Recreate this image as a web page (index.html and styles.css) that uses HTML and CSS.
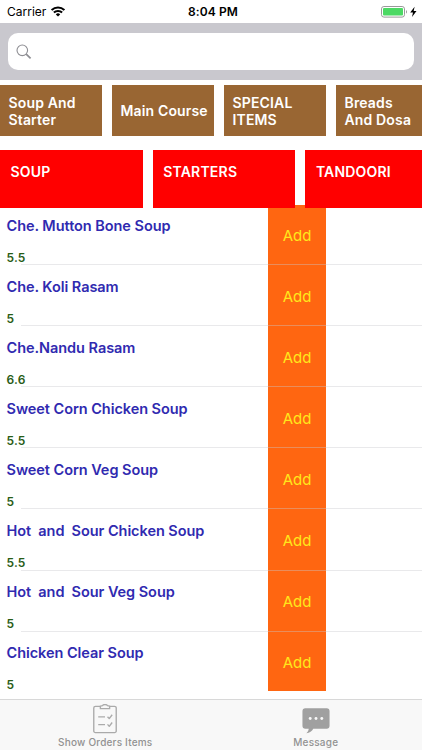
FILE: index.html
```html
<!DOCTYPE html>
<html lang="en">
<head>
  <meta charset="UTF-8">
  <meta name="viewport" content="width=device-width, initial-scale=1.0">
  <title>Menu</title>
  <link rel="stylesheet" href="styles.css">
</head>
<body>
  <div class="app">
    <header class="status-bar">
      <div class="status-left">
        <span class="carrier">Carrier</span>
        <svg class="wifi" width="14" height="11" viewBox="0 0 14 11">
          <path d="M0.6 4.1a9.100 9.100 0 0 1 12.800 0M2.900 6.600a5.900 5.900 0 0 1 8.200 0" fill="none" stroke="#000" stroke-width="2.100"/>
          <path d="M7 10.6 4.8 8.4a3.2 3.2 0 0 1 4.4 0z"/>
        </svg>
      </div>
      <span class="clock">8:04 PM</span>
      <div class="status-right">
        <svg width="37" height="12" viewBox="0 0 37 12">
          <rect x="0.5" y="0.5" width="23" height="10.6" rx="2.4" fill="#fff" stroke="#999"/>
          <rect x="2" y="2" width="20" height="7.6" rx="1" fill="#4cd964"/>
          <path d="M25 4v3.6c1.3-.5 1.3-3.1 0-3.6z" fill="#999"/>
          <path d="M33.6 0.8 29.2 6.5h2.8l-1 4.5 4.5-6h-2.8z"/>
        </svg>
      </div>
    </header>

    <div class="search-bar">
      <div class="search-field">
        <svg width="16" height="16" viewBox="0 0 16 16" fill="none" stroke="#8e8e93">
          <circle cx="6.3" cy="6.3" r="5.3" stroke-width="1.1"/>
          <path d="M10.2 10.2l4.4 4.2" stroke-width="1.7"/>
        </svg>
      </div>
    </div>

    <nav class="categories">
      <div class="category">Soup And<br>Starter</div>
      <div class="category">Main Course</div>
      <div class="category">SPECIAL<br>ITEMS</div>
      <div class="category">Breads<br>And Dosa</div>
    </nav>

    <nav class="sections">
      <div class="section">SOUP</div>
      <div class="section">STARTERS</div>
      <div class="section">TANDOORI</div>
    </nav>

    <!-- Menu items -->
    <main class="items">
      <div class="item">
        <div class="info"><div class="name">Che. Mutton Bone Soup</div><div class="price">5.5</div></div>
        <button class="add">Add</button>
      </div>
      <div class="item">
        <div class="info"><div class="name">Che. Koli Rasam</div><div class="price">5</div></div>
        <button class="add">Add</button>
      </div>
      <div class="item">
        <div class="info"><div class="name">Che.Nandu Rasam</div><div class="price">6.6</div></div>
        <button class="add">Add</button>
      </div>
      <div class="item">
        <div class="info"><div class="name">Sweet Corn Chicken Soup</div><div class="price">5.5</div></div>
        <button class="add">Add</button>
      </div>
      <div class="item">
        <div class="info"><div class="name">Sweet Corn Veg Soup</div><div class="price">5</div></div>
        <button class="add">Add</button>
      </div>
      <div class="item">
        <div class="info"><div class="name">Hot  and  Sour Chicken Soup</div><div class="price">5.5</div></div>
        <button class="add">Add</button>
      </div>
      <div class="item">
        <div class="info"><div class="name">Hot  and  Sour Veg Soup</div><div class="price">5</div></div>
        <button class="add">Add</button>
      </div>
      <div class="item">
        <div class="info"><div class="name">Chicken Clear Soup</div><div class="price">5</div></div>
        <button class="add">Add</button>
      </div>
    </main>

    <footer class="tab-bar">
      <div class="tab">
        <svg width="26" height="31" viewBox="0 0 26 31" fill="none" stroke="#aaa" stroke-width="1.4" stroke-linejoin="round">
          <path d="M8 2.400H3.2a1.8 1.8 0 0 0-1.8 1.8v23.600a1.8 1.8 0 0 0 1.8 1.8h19.6a1.8 1.8 0 0 0 1.8-1.8V4.200a1.8 1.8 0 0 0-1.8-1.8H18"/>
          <path d="M8.200 4.800V2.200l2.300-.5c.5-1.500 4.500-1.500 5 0l2.300.5v2.600z"/>
          <path d="M6 13.300h7M6 21.300h7M15.600 13.100l1.800 2 3-4M15.600 21.100l1.800 2 3-4"/>
        </svg>
        <span>Show Orders Items</span>
      </div>
      <div class="tab">
        <svg width="30" height="31" viewBox="0 0 30 31">
          <path d="M4 4.500h22a3 3 0 0 1 3 3v15a3 3 0 0 1-3 3H12.200c-1.500 2.600-3.600 4.400-7.200 4.700 1.500-1.200 2.300-2.700 2.500-4.700H4a3 3 0 0 1-3-3V7.500a3 3 0 0 1 3-3z" fill="#a0a0a0"/>
          <g fill="#f8f8f8"><circle cx="9" cy="15" r="1.500"/><circle cx="15" cy="15" r="1.500"/><circle cx="21" cy="15" r="1.500"/></g>
        </svg>
        <span>Message</span>
      </div>
    </footer>
  </div>
</body>
</html>
```
FILE: styles.css
```css
* {
  box-sizing: border-box;
}
body {
  margin: 0;
  background-color: #fff;
  font-family: Inter, "Liberation Sans", sans-serif;
}
.app {
  display: flex;
  flex-direction: column;
  height: 750px;
  overflow: hidden;
}

/* Status bar */
.status-bar {
  display: grid;
  grid-template-columns: 1fr auto 1fr;
  align-items: center;
  height: 23px;
  padding: 0 4px 0 7px;
  font-size: 12px;
  line-height: 22px;
}
.status-left {
  display: flex;
  align-items: center;
  gap: 5px;
}
.carrier {
  letter-spacing: 0;
}
.clock {
  margin-left: 1px;
  font-weight: 600;
  letter-spacing: 0.1px;
}
.status-right {
  display: flex;
  justify-content: flex-end;
}

/* Search */
.search-bar {
  height: 57px;
  padding: 10px 8px;
  background-color: #c9c8ce;
}
.search-field {
  display: flex;
  align-items: center;
  height: 37px;
  padding-left: 8px;
  background-color: #fff;
  border-radius: 10px;
}

/* Category and section strips */
.categories {
  display: flex;
  gap: 10px;
  height: 70px;
  padding-top: 5px;
}
.category {
  display: flex;
  flex: none;
  align-items: center;
  width: 102px;
  height: 51px;
  padding-left: 8.5px;
  background-color: #996633;
  color: #fff;
  font-size: 14px;
  font-weight: 600;
  line-height: 17px;
  letter-spacing: 0.15px;
  white-space: nowrap;
}
.sections {
  display: flex;
  position: relative;
  z-index: 1;
  gap: 10px;
  height: 58px;
}
.section {
  flex: none;
  width: 142.7px;
  height: 58px;
  padding: 13px 10.5px;
  background-color: #f00;
  color: #fff;
  font-size: 14px;
  font-weight: 600;
  line-height: 18px;
  letter-spacing: 0.2px;
}

/* Item list */
.items {
  flex: 1;
  margin-top: -4px;
}
.item {
  display: flex;
  position: relative;
  height: 61.1px;
}
.item:first-child .add {
  margin-top: 1px;
}
.item:last-child .add {
  margin-bottom: 2px;
  padding-top: 3px;
}
.item::after {
  content: "";
  position: absolute;
  left: 21px;
  right: 0;
  bottom: 0;
  height: 1px;
  background-color: rgba(200, 199, 204, 0.4);
}
.item:last-child::after {
  display: none;
}
.info {
  width: 268px;
  padding: 11.6px 0 0 6.5px;
}
.name {
  color: #302ab0;
  font-size: 14.5px;
  font-weight: 600;
  line-height: 20px;
  letter-spacing: -0.05px;
  white-space: pre;
}
.price {
  margin-top: 14px;
  color: #285c16;
  font-size: 12px;
  font-weight: 600;
  line-height: 16px;
  letter-spacing: 0.2px;
}
.add {
  width: 58px;
  padding: 1px 0 0;
  border: none;
  background-color: #ff6611;
  color: #ffe81c;
  font-family: inherit;
  font-size: 15px;
}

/* Bottom tabs */
.tab-bar {
  display: flex;
  position: relative;
  z-index: 1;
  height: 51px;
  padding-right: 1px;
  border-top: 1px solid #d8d8d8;
  background-color: #f8f8f8;
}
.tab {
  display: flex;
  flex: 1;
  flex-direction: column;
  align-items: center;
  padding-top: 4px;
  color: #929292;
  font-size: 10px;
  font-weight: 500;
  line-height: 16px;
  letter-spacing: 0.2px;
}
```
